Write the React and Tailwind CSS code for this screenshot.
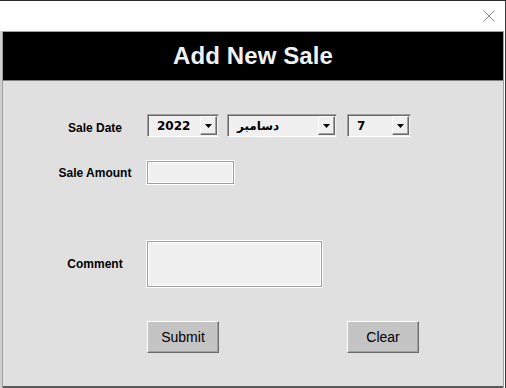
import React from 'react';

const Combo = ({ value, width }) => (
    <div
        className={`${width} h-[23px] flex items-stretch bg-[#f0f0f0] border border-t-[#a0a0a0] border-l-[#a0a0a0] border-b-white border-r-[#e3e3e3] shadow-[inset_1px_1px_0_#696969]`}
    >
        <span className="flex-1 flex items-center pl-[9px] text-[12px] font-bold text-black font-['DejaVu_Sans',sans-serif]" dir="ltr">
            {value}
        </span>
        <div className="w-[17px] my-[1px] mr-[1px] flex items-center justify-center bg-[#f0f0f0] border border-t-white border-l-white border-b-[#696969] border-r-[#696969] shadow-[inset_-1px_-1px_0_#a0a0a0]">
            <svg width="7" height="4" viewBox="0 0 7 4">
                <path d="M0 0h7L3.5 4z" fill="#000" />
            </svg>
        </div>
    </div>
);

const TextBox = ({ className }) => (
    <div className={`${className} bg-[#f0f0f0] border border-[#a0a0a0] shadow-[0_0_0_1px_#fff,inset_0_0_0_1px_#fff]`} />
);

const Btn = ({ children }) => (
    <button className="w-[72px] h-[32px] bg-[#c4c4c4] border border-t-white border-l-white border-b-[#6b6b6b] border-r-[#6b6b6b] shadow-[inset_-1px_-1px_0_#a0a0a0] text-[14px] text-black font-['Liberation_Sans',Arial,sans-serif]">
        {children}
    </button>
);

const App = () => {
    return (
        <div className="w-[506px] h-[388px] bg-white flex flex-col border-t border-[#2b2b2b] overflow-hidden font-['Liberation_Sans',Arial,sans-serif]">
            {/* title bar */}
            <div className="h-[30px] flex justify-end items-center pr-[10px] border-r border-[#3c3c3c]">
                <svg width="12" height="12" viewBox="0 0 12 12">
                    <path d="M0.5 0.5L11.5 11.5M11.5 0.5L0.5 11.5" stroke="#8a8a8a" strokeWidth="1" />
                </svg>
            </div>

            {/* window frame */}
            <div className="flex-1 flex bg-white border-r border-[#3c3c3c]">
                <div className="w-[2px] bg-[#cfcfcf]" />
                <div className="flex-1 flex flex-col border-t border-l border-r border-[#a0a0a0] mr-[1px]">
                    <div className="h-[49px] bg-black border-b border-[#808080] flex items-center justify-center">
                        <h1 className="text-[24px] font-bold text-[#eef2f6] tracking-[0.1px] leading-none">Add New Sale</h1>
                    </div>

                    <div className="flex-1 bg-[#e0e0e0] border-b-[2px] border-[#5a5a5a] pl-[52px] pt-[33px] flex flex-col">
                        <div className="flex items-center h-[23px]">
                            <span className="w-[80px] text-center text-[12px] font-bold text-black mt-[5px]">Sale Date</span>
                            <div className="ml-[12px] flex items-center">
                                <Combo value="2022" width="w-[72px]" />
                                <div className="ml-[8px]">
                                    <Combo value="دسامبر" width="w-[110px]" />
                                </div>
                                <div className="ml-[10px]">
                                    <Combo value="7" width="w-[64px]" />
                                </div>
                            </div>
                        </div>

                        <div className="flex items-center h-[23px] mt-[24px]">
                            <span className="w-[80px] text-center text-[12px] font-bold text-black">Sale Amount</span>
                            <TextBox className="ml-[12px] w-[87px] h-[23px]" />
                        </div>

                        <div className="flex items-center h-[46px] mt-[57px]">
                            <span className="w-[80px] text-center text-[12px] font-bold text-black">Comment</span>
                            <TextBox className="ml-[12px] w-[175px] h-[46px]" />
                        </div>

                        <div className="flex mt-[34px] ml-[92px] gap-[128px]">
                            <Btn>Submit</Btn>
                            <Btn>Clear</Btn>
                        </div>
                    </div>
                </div>
            </div>
        </div>
    );
};

export default App;
